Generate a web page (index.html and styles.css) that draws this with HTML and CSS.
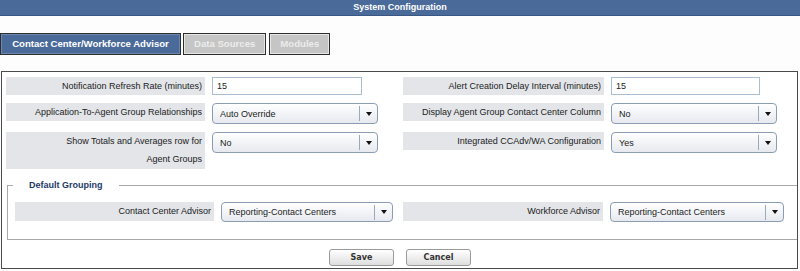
FILE: index.html
```html
<!DOCTYPE html>
<html>
<head>
<meta charset="utf-8">
<title>System Configuration</title>
<link rel="stylesheet" href="styles.css">
</head>
<body>
<div class="header">System Configuration</div>
<div class="tabs">
  <div class="tab active">Contact Center/Workforce Advisor</div>
  <div class="tab">Data Sources</div>
  <div class="tab">Modules</div>
</div>
<div class="panel">
  <div class="form">
    <div class="lbl">Notification Refresh Rate (minutes)</div>
    <div class="ctl"><div class="input">15</div></div>
    <div class="lbl">Alert Creation Delay Interval (minutes)</div>
    <div class="ctl"><div class="input narrow">15</div></div>

    <div class="lbl">Application-To-Agent Group Relationships</div>
    <div class="ctl"><div class="select"><span class="val">Auto Override</span><span class="arrow"><svg width="6" height="4" viewBox="0 0 6 4"><path d="M0 0H6L3 4Z" fill="#111"/></svg></span></div></div>
    <div class="lbl">Display Agent Group Contact Center Column</div>
    <div class="ctl"><div class="select"><span class="val">No</span><span class="arrow"><svg width="6" height="4" viewBox="0 0 6 4"><path d="M0 0H6L3 4Z" fill="#111"/></svg></span></div></div>

    <div class="lbl tall">Show Totals and Averages row for<br>Agent Groups</div>
    <div class="ctl"><div class="select"><span class="val">No</span><span class="arrow"><svg width="6" height="4" viewBox="0 0 6 4"><path d="M0 0H6L3 4Z" fill="#111"/></svg></span></div></div>
    <div class="lbl">Integrated CCAdv/WA Configuration</div>
    <div class="ctl"><div class="select"><span class="val">Yes</span><span class="arrow"><svg width="6" height="4" viewBox="0 0 6 4"><path d="M0 0H6L3 4Z" fill="#111"/></svg></span></div></div>
  </div>

  <fieldset class="group">
    <legend>Default Grouping</legend>
    <div class="group-row">
      <div class="lbl g1">Contact Center Advisor</div>
      <div class="select s1"><span class="val">Reporting-Contact Centers</span><span class="arrow"><svg width="6" height="4" viewBox="0 0 6 4"><path d="M0 0H6L3 4Z" fill="#111"/></svg></span></div>
      <div class="lbl g2">Workforce Advisor</div>
      <div class="select s2"><span class="val">Reporting-Contact Centers</span><span class="arrow"><svg width="6" height="4" viewBox="0 0 6 4"><path d="M0 0H6L3 4Z" fill="#111"/></svg></span></div>
    </div>
  </fieldset>

  <div class="buttons">
    <button class="btn">Save</button>
    <button class="btn">Cancel</button>
  </div>
</div>
</body>
</html>
```
FILE: styles.css
```css
html, body {
  margin: 0;
  padding: 0;
  background: #fdfdfd;
}
body {
  width: 800px;
  height: 271px;
  overflow: hidden;
  font-family: "Liberation Sans", Arial, sans-serif;
  font-size: 9px;
  color: #222;
}
.header {
  height: 15px;
  line-height: 15px;
  background: #4a6a99;
  border-bottom: 1px solid #3a5683;
  color: #fff;
  font-weight: bold;
  text-align: center;
}
.tabs {
  display: flex;
  margin-top: 17px;
  height: 22px;
}
.tab {
  box-sizing: border-box;
  height: 22px;
  line-height: 20px;
  padding: 0 10px;
  border: 1px solid #2e2e2e;
  background: #c5c5c5;
  color: #ececec;
  font-weight: bold;
  font-size: 9.6px;
  margin-right: 3px;
  box-shadow: inset 0 0 0 1px #e6e6e6;
}
.tab.active {
  width: 181px;
  text-align: center;
  background: #4a6a99;
  color: #fff;
  margin-right: 2px;
  box-shadow: inset 0 0 0 1px #6d88b0;
}
.panel {
  margin: 16px 2px 0 1px;
  border: 1px solid #4a4a4a;
  background: #fff;
  padding: 5px 0 3px 4px;
  height: 188px;
  box-sizing: content-box;
}
.form {
  display: grid;
  grid-template-columns: 199px 198px 201px 1fr;
  row-gap: 8px;
  align-items: start;
}
.lbl {
  background: #e3e5e9;
  line-height: 18px;
  text-align: right;
  padding-right: 3px;
  white-space: nowrap;
}
.lbl.tall {
  padding-bottom: 1px;
}
.ctl {
  padding-left: 7px;
}
.input {
  box-sizing: border-box;
  width: 150px;
  height: 18px;
  line-height: 16px;
  border: 1px solid #a9bdd3;
  background: #fff;
  padding-left: 4px;
}
.input.narrow {
  width: 149px;
}
.select {
  box-sizing: border-box;
  display: flex;
  align-items: center;
  width: 166px;
  height: 21px;
  border: 1px solid #8c9cb3;
  border-radius: 4px;
  background: linear-gradient(#ffffff, #e6e9ef);
}
.select .val {
  flex: 1;
  padding-left: 7px;
  white-space: nowrap;
}
.select .arrow {
  width: 17px;
  height: 15px;
  border-left: 1px solid #98a9c0;
  display: flex;
  align-items: center;
  justify-content: center;
}
.group {
  margin: 10px 0 0 1px;
  padding: 11px 7px 17px 7px;
  border: 1px solid #a8a8a8;
  border-width: 1px 0 1px 1px;
  min-width: 0;
}
.group legend {
  margin-left: -2px;
  padding: 0 16px;
  line-height: 12px;
  font-weight: bold;
  color: #1d3a68;
}
.group-row {
  display: flex;
  align-items: flex-start;
}
.lbl.g1 {
  width: 196px;
  line-height: 19px;
}
.lbl.g2 {
  width: 197px;
  line-height: 19px;
  margin-left: 10px;
}
.select.s1 {
  width: 172px;
  height: 20px;
  margin-left: 7px;
}
.select.s2 {
  width: 174px;
  height: 20px;
  margin-left: 7px;
}
.buttons {
  display: flex;
  justify-content: center;
  gap: 12px;
  margin-top: 9px;
  padding-right: 3px;
}
.btn {
  box-sizing: border-box;
  min-width: 65px;
  height: 17px;
  padding: 0 10px;
  border: 1px solid #9a9a9a;
  border-radius: 3px;
  background: linear-gradient(#ffffff, #dedede);
  font-family: "DejaVu Sans", sans-serif;
  font-weight: bold;
  font-size: 8px;
  color: #333;
  line-height: 15px;
}
```
